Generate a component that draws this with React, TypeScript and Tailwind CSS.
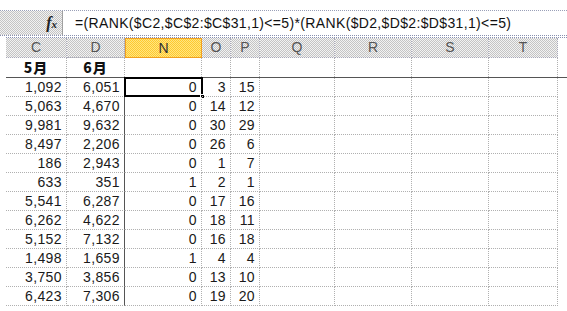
import React from "react";

const checker =
  "bg-[repeating-conic-gradient(#c4c4c4_0_25%,#f2f2f2_0_50%)] bg-[length:2px_2px]";

const cols = ["C", "D", "N", "O", "P", "Q", "R", "S", "T"];
const widths = ["w-[61px]", "w-[58px]", "w-[77px]", "w-[29px]", "w-[29px]", "w-[75px]", "w-[77px]", "w-[77px]", "w-[69px]"];

const data: (string | number)[][] = [
  ["1,092", "6,051", 0, 3, 15],
  ["5,063", "4,670", 0, 14, 12],
  ["9,981", "9,632", 0, 30, 29],
  ["8,497", "2,206", 0, 26, 6],
  ["186", "2,943", 0, 1, 7],
  ["633", "351", 1, 2, 1],
  ["5,541", "6,287", 0, 17, 16],
  ["6,262", "4,622", 0, 18, 11],
  ["5,152", "7,132", 0, 16, 18],
  ["1,498", "1,659", 1, 4, 4],
  ["3,750", "3,856", 0, 13, 10],
  ["6,423", "7,306", 0, 19, 20],
];

const font = "font-['Liberation_Sans',Arial,sans-serif]";

export default function App() {
  return (
    <div className={`w-[567px] h-[311px] bg-white overflow-hidden ${font} text-[#1a1a1a]`}>
      {/* top band */}
      <div className="h-[11px] border-b border-dotted border-[#9aa0b8]" />
      {/* formula bar */}
      <div className="flex h-[25px] border-b border-dotted border-[#8890b0]">
        <div className={`w-[63px] ${checker} flex items-center justify-end pr-[5px] border-r border-[#a0a0a0]`}>
          <span className="font-['Liberation_Serif',serif] italic font-bold text-[16px] leading-none text-[#222]">
            f<span className="text-[11px]">x</span>
          </span>
        </div>
        <div className="flex-1 flex items-center pl-[12px] text-[14px] tracking-[0.35px] text-[#111] whitespace-nowrap">
          =(RANK($C2,$C$2:$C$31,1)&lt;=5)*(RANK($D2,$D$2:$D$31,1)&lt;=5)
        </div>
      </div>
      {/* sheet */}
      <div className="pl-[6px]">
        {/* header row */}
        <div className="flex h-[21px] mt-[1px] border-t border-dotted border-[#8890b0]">
          {cols.map((c, i) => (
            <div
              key={c}
              className={`${widths[i]} h-full flex items-center justify-center text-[14px] ${
                c === "N"
                  ? "bg-[repeating-conic-gradient(#ffc830_0_25%,#ffe680_0_50%)] bg-[length:2px_2px] border border-[#f0a020] text-[#333]"
                  : `${checker} border-r border-b border-dotted border-[#a8a8b8] text-[#555]`
              }`}
            >
              {c}
            </div>
          ))}
        </div>
        {/* month row */}
        <div className="flex h-[20px] border-b border-[#555]">
          {cols.map((c, i) => (
            <div
              key={c}
              className={`${widths[i]} h-full flex items-center justify-center border-r border-dotted border-[#b0b0b0] font-['Noto_Sans_CJK_JP',sans-serif] font-black text-[14px] tracking-[1px] text-[#111]`}
            >
              {i === 0 ? "5月" : i === 1 ? "6月" : ""}
            </div>
          ))}
        </div>
        {/* data rows */}
        {data.map((row, r) => (
          <div key={r} className="flex h-[19px]">
            {cols.map((c, i) => {
              const v = i < 5 ? row[i] : "";
              const selected = r === 0 && c === "N";
              return (
                <div
                  key={c}
                  className={`${widths[i]} h-full relative flex items-center justify-end pr-[4px] text-[14px] tracking-[0.4px] border-b border-dotted border-[#b0b0b0] ${
                    i === 1 ? "border-r border-r-[#555] [border-right-style:solid]" : "border-r"
                  }`}
                >
                  {String(v)}
                  {selected && (
                    <>
                      <div className="absolute left-[-1px] top-[-1px] right-[-2px] bottom-[-1px] border-2 border-black pointer-events-none" />
                      <div className="absolute right-[-4px] bottom-[-3px] w-[5px] h-[5px] bg-black border border-white" />
                    </>
                  )}
                </div>
              );
            })}
          </div>
        ))}
      </div>
    </div>
  );
}
